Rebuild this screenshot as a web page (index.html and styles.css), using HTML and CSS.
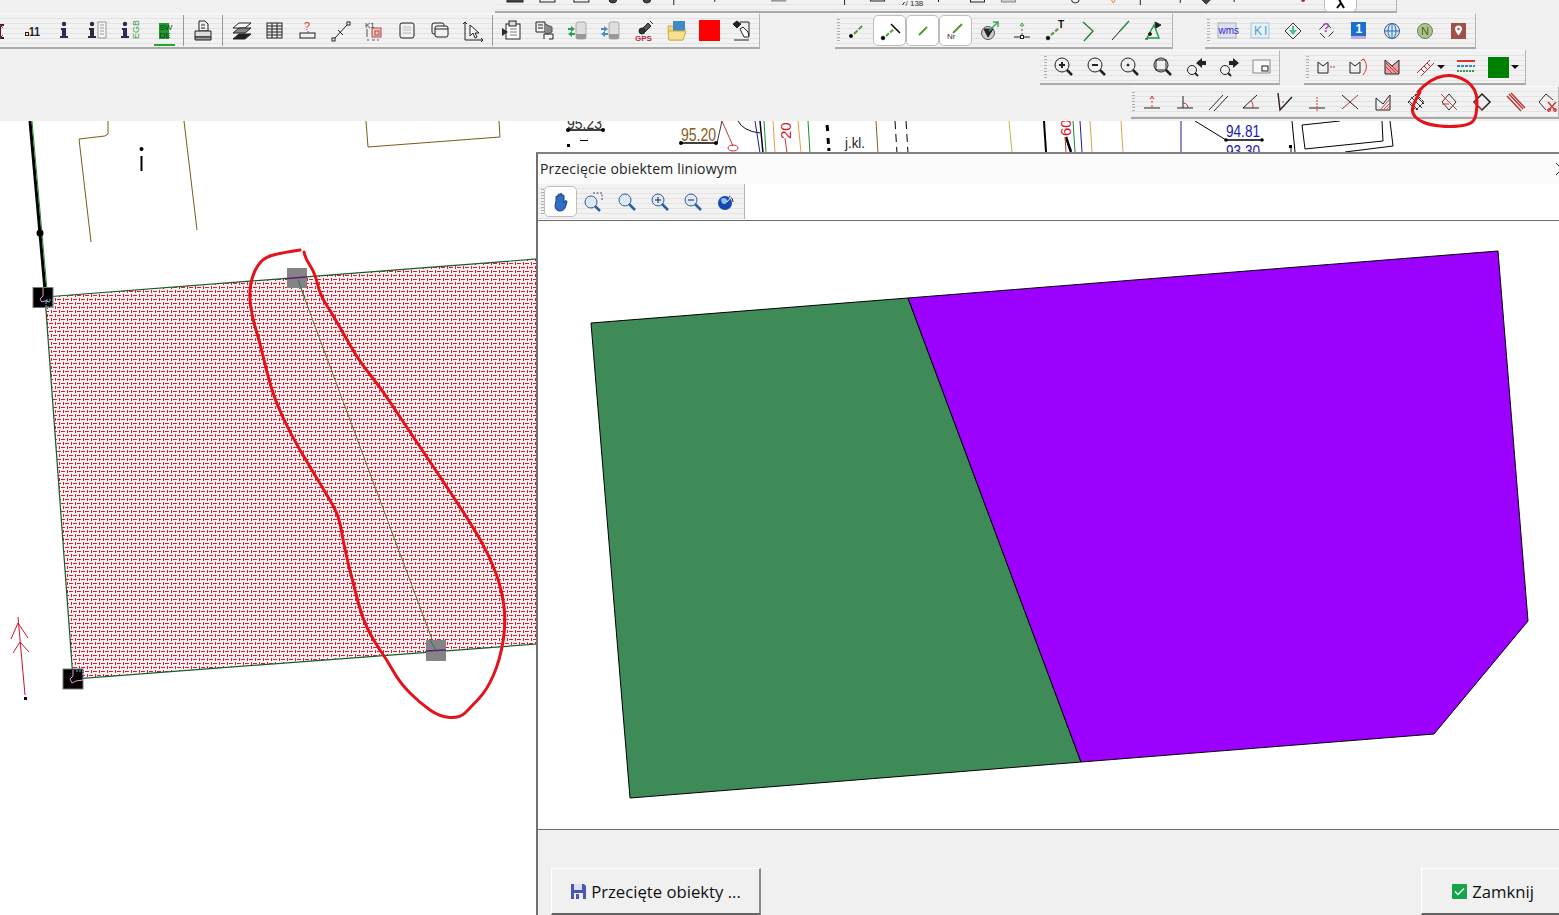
FILE: index.html
```html
<!DOCTYPE html>
<html lang="pl">
<head>
<meta charset="utf-8">
<title>Przecięcie obiektem liniowym</title>
<link rel="stylesheet" href="styles.css">
</head>
<body>
<div class="app">
  <header class="bands">
    <div class="row row-a">
      <div class="tb tb-clip">
        <svg class="clip-marks" width="902" height="12" viewBox="495 0 902 12">
          <g fill="#444" stroke="#222">
            <rect x="507" y="-8" width="16" height="10"/><rect x="540" y="-8" width="15" height="10" fill="none"/><rect x="574" y="-8" width="15" height="10" fill="none"/>
            <circle cx="613" cy="-1" r="4"/><circle cx="647" cy="-1" r="4"/><path d="M674 0v5M715 0v2"/>
            <rect x="772" y="-8" width="14" height="9" fill="#aaa" stroke="#888"/><path d="M845 0v5"/><rect x="871" y="-8" width="14" height="9" fill="none"/>
            <path d="M905 2l-2 3M939 0v2"/><rect x="971" y="-8" width="14" height="10" fill="none"/><rect x="1002" y="-8" width="14" height="10" fill="#ccc" stroke="#888"/>
            <rect x="1036" y="-6" width="14" height="6" fill="#bcd" stroke="none"/><circle cx="1076" cy="-1" r="4" fill="none"/><path d="M1111 -2l3 5 3-5" stroke="#e7813a" fill="none"/><path d="M1141 0v5M1181 0v3"/>
            <path d="M1202 -1h10l-5 5z"/><path d="M1235 0v2"/><circle cx="1304" cy="0" r="2" fill="#933" stroke="none"/>
          </g>
          <text x="906" y="6" class="clip-txt">/ 138</text>
        </svg>
        <div class="clip-active">
          <svg width="16" height="12" viewBox="0 0 16 12"><path d="M5 -3l3 6 3 5M8 3L4 8" fill="none" stroke="#000" stroke-width="2"/></svg>
        </div>
      </div>
    </div>

    <div class="row row-b">
      <div class="tb tb-main">
        <div class="btn btn-cut"><svg width="15" height="24" viewBox="16 0 15 24"><path d="M12 6h8M12 19h8M16 6v13" fill="none" stroke="#3a2030" stroke-width="2"/><path d="M13 9l3-3 3 3M13 16l3 3 3-3" fill="none" stroke="#c22" stroke-width="1"/></svg></div>
        <div class="btn"><svg class="ic" viewBox="0 0 24 24"><rect x="5.500" y="13.500" width="3" height="3"/><text x="9" y="17" class="t-11" textLength="11" lengthAdjust="spacingAndGlyphs">11</text></svg></div>
        <div class="btn"><svg class="ic" viewBox="0 0 24 24"><circle cx="11" cy="5" r="2.200" class="f-navy"/><path class="f-navy" d="M8 9h5v8h2v2H7v-2h2v-6H8z"/></svg></div>
        <div class="btn"><svg class="ic" viewBox="0 0 24 24"><circle cx="6" cy="5" r="2.200" class="f-dark"/><path class="f-dark" d="M3 9h5v8h2v2H2v-2h2v-6H3z"/><rect x="12" y="3" width="8" height="16" stroke="#999" fill="#f6f6f6"/><path d="M14 6h4M14 9h4M14 12h4M14 15h4" stroke="#999"/></svg></div>
        <div class="btn"><svg class="ic" viewBox="0 0 24 24"><circle cx="6" cy="5" r="2.200" class="f-navy"/><path class="f-navy" d="M3 9h5v8h2v2H2v-2h2v-6H3z"/><text x="-20" y="20" class="t-egb" transform="rotate(-90)">EGB</text></svg></div>
        <div class="btn btn-on-line"><svg class="ic" viewBox="0 0 24 24"><rect x="7" y="4" width="10" height="16" fill="#1f9b2f" stroke="none"/><text x="7.500" y="11" class="t-swde">SW</text><text x="7.500" y="19" class="t-swde">DE</text></svg></div>
        <div class="sep"></div>
        <div class="btn"><svg class="ic" viewBox="0 0 24 24"><path d="M8 2h6l3 3v7H8zM10 6h4M10 9h4"/><path d="M4 12h16v6H4z" fill="#ddd"/><path d="M4 18h16v3H4z" fill="#999"/></svg></div>
        <div class="sep"></div>
        <div class="btn"><svg class="ic" viewBox="0 0 24 24"><path d="M3 9l6-5h12l-6 5z" fill="#fff"/><path d="M3 14l6-5h12l-6 5z" fill="#888"/><path d="M3 20l6-5h12l-6 5z" fill="#222"/></svg></div>
        <div class="btn"><svg class="ic" viewBox="0 0 24 24"><rect x="4" y="4" width="15" height="15"/><path d="M4 7h15M4 10h15M4 13h15M4 16h15M9 4v15M14 4v15"/></svg></div>
        <div class="btn"><svg class="ic" viewBox="0 0 24 24"><rect x="4" y="14" width="15" height="5"/><path d="M12 12v2" stroke="#c22"/><text x="8" y="11" class="t-q">?</text></svg></div>
        <div class="btn"><svg class="ic" viewBox="0 0 24 24"><path d="M5 20L19 5"/><rect x="3" y="19" width="3" height="3" fill="#fff"/><rect x="18" y="3" width="3" height="3" fill="#fff"/><path d="M9 11l5 5"/></svg></div>
        <div class="btn"><svg class="ic" viewBox="0 0 24 24"><text x="3" y="9" class="t-k1">K1</text><rect x="10" y="9" width="9" height="9" fill="#e9c9c9" stroke="#b44"/><rect x="13" y="12" width="4" height="4" stroke="#b44"/><path d="M5 10v8M5 21h2M10 21h3M15 21h2" stroke="#555"/></svg></div>
        <div class="btn"><svg class="ic" viewBox="0 0 24 24"><rect x="5" y="4" width="14" height="15" rx="2"/><path d="M8 8h8M8 11h8M8 14h8" stroke="#bbb"/></svg></div>
        <div class="btn"><svg class="ic" viewBox="0 0 24 24"><rect x="4" y="4" width="12" height="11" rx="2"/><rect x="7" y="7" width="13" height="11" rx="2" fill="#f2f2f2"/><path d="M7 10h13" stroke="#222"/></svg></div>
        <div class="btn"><svg class="ic" viewBox="0 0 24 24"><path d="M4 3v18h18M2 5l2-2 2 2M20 19l2 2-2 2"/><path d="M9 6v11l3-3 2 5 2-1-2-4h4z" fill="#fff"/></svg></div>
        <div class="sep"></div>
        <div class="btn"><svg class="ic" viewBox="0 0 24 24"><rect x="6" y="5" width="14" height="15" fill="#fff"/><rect x="9" y="2" width="7" height="5" fill="#ddd"/><path d="M2 9l6 4-6 4z" class="f-dark"/><path d="M10 10h7M10 13h7M10 16h7" stroke="#777"/></svg></div>
        <div class="btn"><svg class="ic" viewBox="0 0 24 24"><path d="M3 3h9v10H3zM5 6h5M5 9h5" /><path d="M12 5l7 3v5l-4 2-3-1" fill="#888" stroke="#555"/><path d="M11 15h9v5h-4M11 15v5"/></svg></div>
        <div class="btn"><svg class="ic" viewBox="0 0 24 24"><rect x="10" y="3" width="10" height="17" rx="2" fill="#ddd" stroke="#aaa"/><path d="M10 15h10v5H10z" fill="#999" stroke="none"/><path d="M2 9h3v-2l4 3-4 3v-2H2zM9 14h-3v-2l-4 3 4 3v-2h3z" fill="#2aa24a" stroke="none"/></svg></div>
        <div class="btn"><svg class="ic" viewBox="0 0 24 24"><rect x="10" y="3" width="10" height="17" rx="2" fill="#ddd" stroke="#aaa"/><path d="M10 15h10v5H10z" fill="#999" stroke="none"/><path d="M2 9h3v-2l4 3-4 3v-2H2zM9 14h-3v-2l-4 3 4 3v-2h3z" fill="#3f8fd0" stroke="none"/></svg></div>
        <div class="btn"><svg class="ic" viewBox="0 0 24 24"><path d="M8 12l8-8 3 3-8 8z" fill="#555"/><circle cx="10" cy="12" r="3" fill="#333"/><path d="M18 2l3 3" stroke="#333"/><text x="3" y="22" class="t-gps">GPS</text></svg></div>
        <div class="btn"><svg class="ic" viewBox="0 0 24 24"><path d="M3 7h5l2 2h10l-2 12H4z" fill="#f2d774" stroke="#cfae3f"/><path d="M8 2h12v10H8z" fill="#3f89c9" stroke="none"/><path d="M3 12h18l-3 9H4z" fill="#f7e08e" stroke="#cfae3f"/></svg></div>
        <div class="btn"><div class="swatch swatch-red"></div></div>
        <div class="btn"><svg class="ic" viewBox="0 0 24 24"><path d="M2 5l4-3 4 3-4 4z" fill="#222"/><path d="M9 3h9v14" /><path d="M9 10l3-2 5 5 1 5h-5z" fill="#fff"/><path d="M3 21h15"/></svg></div>
      </div>

      <div class="tb tb-draw">
        <div class="grip"></div>
        <div class="btn"><svg class="ic" viewBox="0 0 24 24"><circle cx="6" cy="17" r="1.600" fill="#000"/><path d="M9 15l9-9" stroke="#5b9a3c" stroke-width="2" stroke-dasharray="5 1.500"/></svg></div>
        <div class="btn on"><svg class="ic" viewBox="0 0 24 24"><circle cx="5" cy="19" r="1.800" fill="#000"/><path d="M8 17l8-7" stroke="#5b9a3c" stroke-width="2" stroke-dasharray="4 1.500"/><path d="M13 5l9 9" stroke="#000" stroke-width="1.500"/></svg></div>
        <div class="btn on"><svg class="ic" viewBox="0 0 24 24"><path d="M8 16l8-8" stroke="#4e9a30" stroke-width="2"/></svg></div>
        <div class="btn on"><svg class="ic" viewBox="0 0 24 24"><path d="M9 14l9-9" stroke="#4e9a30" stroke-width="2"/><text x="3" y="20" class="t-nr">Nr</text></svg></div>
        <div class="btn"><svg class="ic" viewBox="0 0 24 24"><circle cx="11" cy="14" r="6.500" fill="#ccc" stroke="#555"/><path d="M7 10h9l-5 8z" fill="#222"/><path d="M12 12l9-9M16 3h5v5" stroke="#3ea66a" stroke-width="1.500"/></svg></div>
        <div class="btn"><svg class="ic" viewBox="0 0 24 24"><path d="M4 18h16"/><rect x="10.500" y="16.500" width="3" height="3" fill="#fff"/><path d="M12 16V6" stroke="#555" stroke-dasharray="2 2"/><path d="M10 7l2-3 2 3" stroke="#3a9a3a"/></svg></div>
        <div class="btn"><svg class="ic" viewBox="0 0 24 24"><circle cx="5" cy="19" r="1.800" fill="#000"/><path d="M8 16l8-7" stroke="#5b9a3c" stroke-width="2.200" stroke-dasharray="4 1.500"/><text x="15" y="9" class="t-t">T</text></svg></div>
        <div class="btn"><svg class="ic" viewBox="0 0 24 24"><path d="M7 3l10 9-9 10" stroke="#2e7d3d" stroke-width="1.400"/></svg></div>
        <div class="btn"><svg class="ic" viewBox="0 0 24 24"><path d="M3 21L11 12" stroke="#222"/><path d="M11 12l9-10" stroke="#2e8d3d" stroke-width="1.600"/></svg></div>
        <div class="btn"><svg class="ic" viewBox="0 0 24 24"><path d="M5 19h12L12 6z" stroke="#1f9b3f" stroke-width="1.400"/><path d="M13 3l6 3-5 3z" fill="#222"/><path d="M3 20h3" stroke="#222"/><circle cx="8" cy="15" r="1.500" fill="#222"/></svg></div>
      </div>

      <div class="tb tb-web">
        <div class="grip"></div>
        <div class="btn"><svg class="ic" viewBox="0 0 24 24"><rect x="3" y="4" width="18" height="15" fill="#dfe0f2" stroke="#aab"/><text x="3.500" y="15" class="t-wms">wms</text></svg></div>
        <div class="btn"><svg class="ic" viewBox="0 0 24 24"><rect x="3" y="4" width="18" height="15" fill="#e4f1f8" stroke="#9fc6dc"/><text x="6" y="16" class="t-ki">KI</text></svg></div>
        <div class="btn"><svg class="ic" viewBox="0 0 24 24"><path d="M12 4l8 8-8 8-8-8z" stroke="#333"/><path d="M11 7v4H8l4 5 4-5h-3V7z" fill="#47c19a" stroke="none"/></svg></div>
        <div class="btn"><svg class="ic" viewBox="0 0 24 24"><path d="M12 4l8 8-8 8-8-8z" stroke="#333" stroke-dasharray="7 5"/><text x="8" y="13" class="t-pq">?</text></svg></div>
        <div class="btn"><svg class="ic" viewBox="0 0 24 24"><rect x="4" y="3" width="15" height="14" fill="#1b6fd1" stroke="none"/><rect x="4" y="17" width="15" height="3" fill="#c4a6e0" stroke="none"/><text x="8.500" y="14" class="t-one">1</text></svg></div>
        <div class="btn"><svg class="ic" viewBox="0 0 24 24"><circle cx="12" cy="12" r="7.500" fill="#d6e6f6" stroke="#557"/><ellipse cx="12" cy="12" rx="4" ry="7.500" stroke="#2f6fb8"/><path d="M4.500 12h15M12 4.500v15" stroke="#2f6fb8"/></svg></div>
        <div class="btn"><svg class="ic" viewBox="0 0 24 24"><circle cx="12" cy="12" r="7.500" fill="#a9c97e" stroke="#777"/><text x="8" y="16" class="t-n">N</text></svg></div>
        <div class="btn"><svg class="ic" viewBox="0 0 24 24"><rect x="5" y="4" width="15" height="16" fill="#a0504a" stroke="none"/><path d="M12.500 6.500a3.500 3.500 0 0 1 3.500 3.500c0 2-3.500 6.500-3.500 6.500s-3.500-4.500-3.500-6.500a3.500 3.500 0 0 1 3.500-3.500z" fill="#fff" stroke="none"/><circle cx="12.500" cy="10" r="1.200" fill="#a0504a" stroke="none"/></svg></div>
      </div>
    </div>

    <div class="row row-c">
      <div class="tb tb-zoom">
        <div class="grip"></div>
        <div class="btn"><svg class="ic ic-b" viewBox="0 0 24 24"><circle cx="10" cy="10" r="7"/><path d="M7 10h6M10 7v6" stroke-width="2"/><path d="M15 15l5 5" stroke-width="2.500"/></svg></div>
        <div class="btn"><svg class="ic ic-b" viewBox="0 0 24 24"><circle cx="10" cy="10" r="7"/><path d="M7 10h6" stroke-width="2"/><path d="M15 15l5 5" stroke-width="2.500"/></svg></div>
        <div class="btn"><svg class="ic ic-b" viewBox="0 0 24 24"><circle cx="10" cy="10" r="7"/><circle cx="10" cy="10" r="1" fill="#222"/><path d="M15 15l5 5" stroke-width="2.500"/></svg></div>
        <div class="btn"><svg class="ic ic-b" viewBox="0 0 24 24"><circle cx="10" cy="10" r="7"/><rect x="5" y="5" width="10" height="10"/><path d="M15 15l5 5" stroke-width="2.500"/></svg></div>
        <div class="btn"><svg class="ic ic-b" viewBox="0 0 24 24"><circle cx="8" cy="15" r="4.500"/><path d="M11 18l3 3" stroke-width="2"/><path d="M12 8l6-5v3h4v4h-4v3z" fill="#222" stroke="none"/></svg></div>
        <div class="btn"><svg class="ic ic-b" viewBox="0 0 24 24"><circle cx="8" cy="15" r="4.500"/><path d="M11 18l3 3" stroke-width="2"/><path d="M22 8l-6-5v3h-4v4h4v3z" fill="#222" stroke="none"/></svg></div>
        <div class="btn"><svg class="ic ic-b" viewBox="0 0 24 24"><rect x="3" y="5" width="17" height="13" fill="#f7f7f7" stroke="#888"/><rect x="12" y="11" width="6" height="5" stroke="#222"/></svg></div>
      </div>

      <div class="tb tb-style">
        <div class="grip"></div>
        <div class="btn"><svg class="ic" viewBox="0 0 24 24"><path d="M4 7l5 4 5-4v11H4z"/><path d="M16 12h6" stroke="#d33" stroke-dasharray="2 1"/></svg></div>
        <div class="btn"><svg class="ic" viewBox="0 0 24 24"><path d="M3 7l5 4 5-4v11H3z"/><path d="M16 4c4 3 5 10 0 16M14 6l2-2 2 1" stroke="#d33"/></svg></div>
        <div class="btn"><svg class="ic" viewBox="0 0 24 24"><path d="M5 5l7 6 7-6v14H5z" fill="#e8a0a0"/><path d="M6 12l6 6M6 8l10 10M12 11l7 7" stroke="#c33"/></svg></div>
        <div class="btn"><svg class="ic" viewBox="0 0 24 24"><path d="M4 18L17 5M8 21L21 8" stroke="#a33"/><path d="M8 14l4 4M11 11l4 4M14 8l4 4" stroke="#a33"/></svg></div>
        <div class="arrow"></div>
        <div class="btn"><svg class="ic" viewBox="0 0 24 24"><path d="M3 6h18" stroke="#d33" stroke-width="2"/><path d="M3 11h18" stroke="#3a8ac0" stroke-width="2" stroke-dasharray="3 1"/><path d="M3 16h18" stroke="#2aa04a" stroke-width="2" stroke-dasharray="2 1"/></svg></div>
        <div class="btn"><div class="swatch swatch-green"></div></div>
        <div class="arrow"></div>
      </div>
    </div>

    <div class="row row-d">
      <div class="tb tb-geom">
        <div class="grip"></div>
        <div class="btn"><svg class="ic" viewBox="0 0 24 24"><path d="M4 18h16"/><path d="M12 17V8" stroke="#d33" stroke-dasharray="2 2"/><path d="M10 9l2-3 2 3" stroke="#d33"/></svg></div>
        <div class="btn"><svg class="ic" viewBox="0 0 24 24"><path d="M4 18h16M10 18V6"/><path d="M10 13c3 0 5 2 5 5" stroke="#a33"/></svg></div>
        <div class="btn"><svg class="ic" viewBox="0 0 24 24"><path d="M3 20L17 5M8 21L22 6" stroke="#333"/></svg></div>
        <div class="btn"><svg class="ic" viewBox="0 0 24 24"><path d="M18 5L4 18h16"/><path d="M12 11c2 2 2 4 2 7" stroke="#d33"/></svg></div>
        <div class="btn"><svg class="ic" viewBox="0 0 24 24"><path d="M6 3l2 17L20 7" stroke-width="1.400"/><path d="M6 12h8" stroke="#d33" stroke-dasharray="2 2"/></svg></div>
        <div class="btn"><svg class="ic" viewBox="0 0 24 24"><path d="M4 18h16"/><path d="M12 7v14" stroke="#d33" stroke-dasharray="2 1"/></svg></div>
        <div class="btn"><svg class="ic" viewBox="0 0 24 24"><path d="M4 5l16 14" stroke="#222"/><path d="M20 5L4 19" stroke="#b33"/></svg></div>
        <div class="btn"><svg class="ic" viewBox="0 0 24 24"><path d="M5 8l7 6 7-9v15H5z"/><path d="M12 20l7-7M15 20l4-4M9 20l10-11" stroke="#c44"/></svg></div>
        <div class="btn"><svg class="ic" viewBox="0 0 24 24"><path d="M12 4l8 8-8 8-8-8z" stroke-dasharray="3 1"/><path d="M7 7l11 11M5 11l9 9M11 5l9 9" stroke="#333"/></svg></div>
        <div class="btn"><svg class="ic" viewBox="0 0 24 24"><path d="M12 4l7 8-7 8-7-8z" stroke="#333"/><path d="M4 4l16 16M5 14h7" stroke="#d33"/></svg></div>
        <div class="btn"><svg class="ic" viewBox="0 0 24 24"><path d="M12 4l8 8-8 8-8-8z" stroke="#222" stroke-width="1.500"/><path d="M4 12l8 8" stroke="#d33" stroke-width="1.500"/></svg></div>
        <div class="btn"><svg class="ic" viewBox="0 0 24 24"><path d="M4 6l14 15M6 4l14 15M8 3l14 15" stroke="#b33" stroke-width="1.400"/></svg></div>
        <div class="btn"><svg class="ic" viewBox="0 0 24 24"><path d="M10 4l-7 8 7 8" stroke="#333"/><path d="M10 4l7 6" stroke="#333"/><path d="M12 12l8 9M20 12l-8 9" stroke="#d33" stroke-width="1.500"/><circle cx="13" cy="20" r="1.500" stroke="#d33"/><circle cx="19" cy="20" r="1.500" stroke="#d33"/></svg></div>
      </div>
    </div>
  </header>

  <svg class="map" width="1559" height="794" viewBox="0 121 1559 794">
    <defs>
      <pattern id="hatch" width="8" height="8" patternUnits="userSpaceOnUse" x="1" y="2">
        <rect width="8" height="8" fill="#fff4f4"/>
        <g fill="#e2142c">
          <rect x="0" y="1" width="4" height="1"/><rect x="4" y="5" width="4" height="1"/><rect x="6" y="0" width="1" height="3"/><rect x="2" y="4" width="1" height="3"/>
        </g>
      </pattern>
    </defs>
    <g fill="none" stroke="#7a5a22">
      <path d="M108 121v13l-3 2-26 3 12 103M184 121l13 109M366 121l2 26 132-10-1-16"/>
    </g>
    <path d="M30 121L45 290" stroke="#000" stroke-width="3" fill="none"/>
    <path d="M32 121L47 290" stroke="#2a8a2a" stroke-width="1" fill="none"/>
    <circle cx="40" cy="233" r="3.500" fill="#000"/>
    <rect x="140.500" y="156" width="2" height="15" fill="#000"/><circle cx="141.500" cy="149" r="2" fill="#000"/>

    <path d="M45 297L537 259V644L73 679z" fill="url(#hatch)" stroke="#0b6030" stroke-width="1.200"/>
    <path d="M297 278L436 650" stroke="#4a7a3a" stroke-width="1" fill="none"/>

    <g fill="#000" stroke="#7a7a7a"><rect x="33" y="287.500" width="20" height="20"/><rect x="63" y="669" width="20" height="20"/></g>
    <path d="M43 288v8l-3 3 2 3 3-1 5 1" stroke="#e69ad8" fill="none"/><rect x="46" y="300" width="7" height="7" fill="none" stroke="#5fc7d8" stroke-dasharray="2 1"/>
    <path d="M73 670v6l-3 3 2 4 4-2 7-1" stroke="#e69ad8" fill="none"/><path d="M76 671h7v5" fill="none" stroke="#5fc7d8" stroke-dasharray="2 1"/>
    <g fill="#848484"><rect x="287" y="268" width="20" height="20"/><rect x="426" y="640" width="20" height="21"/></g>
    <path d="M287 278.500L307 277M426 651l20-1" stroke="#5a1e78" stroke-width="1.500"/>
    <path d="M298 280l7 18M430 640l6 10" stroke="#27726c"/>

    <g fill="none" stroke="#d3142a">
      <path d="M18 617L25 695M18 623L11 639M18 623L28 638M20 642L13 653M20 642L29 652"/>
    </g>
    <rect x="24" y="697" width="3" height="3" fill="#000"/>

    <g fill="none" stroke-width="1">
      <path d="M568 130H603M681 143H716" stroke="#000" stroke-width="1.500"/>
      <path d="M722 121L717 143" stroke="#333"/>
      <path d="M722 121L733 146" stroke="#c33"/>
      <path d="M738 121q5 10 22 12" stroke="#111"/>
      <path d="M755 121L760 153" stroke="#1a1a9a"/><path d="M760 121L763 153" stroke="#000" stroke-width="1.500"/><path d="M764 121L766 153" stroke="#1a8a2a"/>
      <path d="M773 121L775 153M798 121L801 153" stroke="#e8a040"/><path d="M785 138L787 153" stroke="#c33"/><path d="M808 121L810 153" stroke="#1a8a2a"/>
      <path d="M827 125L828 133M828 138L829 151" stroke="#000" stroke-width="3" stroke-dasharray="6 4"/>
      <path d="M876 121L878 153" stroke="#8a5a22"/>
      <path d="M895 121L897 153M906 121L908 153" stroke="#000" stroke-dasharray="8 5"/>
      <path d="M1009 121L1012 152" stroke="#c9b53a"/>
      <path d="M1044 121L1046 152" stroke="#000" stroke-width="2"/>
      <path d="M1066 137L1071 152" stroke="#000" stroke-width="2.500"/><path d="M1065 137L1066 152" stroke="#c33"/>
      <path d="M1073 121L1075 152" stroke="#1a8a2a"/><path d="M1080 121L1082 152" stroke="#1a1a9a"/>
      <path d="M1090 121L1092 152M1121 121L1123 152" stroke="#e8a040"/>
      <path d="M1181 121V152" stroke="#1a1a9a"/>
      <path d="M1195 121L1226 140" stroke="#000"/><path d="M1226 140H1262" stroke="#000" stroke-width="1.500"/>
      <path d="M1292 121L1295 152M1291 148v5" stroke="#000"/>
      <path d="M1302 125L1340 121M1302 125L1305 149L1383 141L1382 121M1390 121L1393 146L1345 152" stroke="#000"/>
    </g>
    <g fill="#000"><circle cx="568" cy="130" r="2"/><circle cx="603" cy="130" r="2"/><circle cx="681" cy="143" r="2"/><circle cx="716" cy="143" r="2"/><rect x="567" y="144" width="3" height="3"/><rect x="580" y="140" width="8" height="1"/><circle cx="1226" cy="140" r="1.800"/><circle cx="1262" cy="140" r="1.800"/><rect x="1289" y="145" width="3" height="3"/></g>
    <text x="567" y="129" class="m-txt m-dark" textLength="35" lengthAdjust="spacingAndGlyphs">95.23</text>
    <text x="681" y="141" class="m-txt m-brown" textLength="35" lengthAdjust="spacingAndGlyphs">95.20</text>
    <text x="845" y="148" class="m-txt m-small" textLength="20" lengthAdjust="spacingAndGlyphs">j.kl.</text>
    <text x="1226" y="137" class="m-txt m-blue" textLength="34" lengthAdjust="spacingAndGlyphs">94.81</text>
    <text x="1226" y="157" class="m-txt m-blue" textLength="34" lengthAdjust="spacingAndGlyphs">93.30</text>
    <text transform="translate(791 139) rotate(-90)" class="m-txt m-red">20</text>
    <text transform="translate(1071 136) rotate(-90)" class="m-txt m-red">60</text>
    <ellipse cx="733" cy="148" rx="5" ry="3" fill="none" stroke="#c33"/>

    <path class="scribble" d="M300 250 Q280 253 271.500 255.500 Q263 258 258 265.500 Q253 273 251 283 Q249 293 250.500 305 Q252 317 256 330 Q260 343 263.500 358 Q267 373 271 386.500 Q275 400 282.500 416.500 Q290 433 300 450 Q310 467 320 483.500 Q330 500 334.500 508.500 Q339 517 341 528.500 Q343 540 345.500 551.500 Q348 563 351.500 576.500 Q355 590 358.500 603.500 Q362 617 367.500 628.500 Q373 640 380 650 Q387 660 393.500 671.500 Q400 683 410 693 Q420 703 430 710 Q440 717 450 717.500 Q460 718 465 713 Q470 708 478.500 699 Q487 690 493.500 675 Q500 660 503 641.500 Q506 623 504 606.500 Q502 590 496 573.500 Q490 557 481.500 542 Q473 527 460 507 Q447 487 433.500 467 Q420 447 410 432 Q400 417 390 402 Q380 387 370 374.500 Q360 362 353.500 351 Q347 340 340 327.500 Q333 315 326.500 305 Q320 295 317.500 284 Q315 273 310 265.500 Q305 258 304 252"/>
  </svg>

  <section class="dialog">
    <div class="dlg-title"><span>Przecięcie obiektem liniowym</span><svg class="dlg-x" width="14" height="14" viewBox="0 0 14 14"><path d="M1 1l12 12M13 1L1 13" stroke="#222" fill="none"/></svg></div>
    <div class="dlg-toolrow">
      <div class="tb tb-dlg">
        <div class="grip"></div>
        <div class="btn on"><svg class="ic" viewBox="0 0 24 24"><path d="M7 11V7a1 1 0 0 1 2 0V5a1 1 0 0 1 2 0v-.500a1 1 0 0 1 2 0V6a1 1 0 0 1 2 0v7l1-2c1-1 2 0 2 1l-2 6c-1 2-3 3-5 3-3 0-5-2-5-5z" fill="#2f6fc9" stroke="#1c3f80"/></svg></div>
        <div class="btn"><svg class="ic ic-l" viewBox="0 0 24 24"><circle cx="9" cy="12" r="6" fill="#dce9f7"/><path d="M13 16l5 5" stroke="#2a5fa8" stroke-width="2.500"/><path d="M11 3h9v8" stroke="#446" stroke-dasharray="2 1.500"/></svg></div>
        <div class="btn"><svg class="ic ic-l" viewBox="0 0 24 24"><circle cx="10" cy="10" r="6" fill="#dce9f7"/><path d="M14 14l6 6" stroke="#2a5fa8" stroke-width="2.500"/></svg></div>
        <div class="btn"><svg class="ic ic-l" viewBox="0 0 24 24"><circle cx="10" cy="10" r="6" fill="#dce9f7"/><path d="M7 10h6M10 7v6" stroke="#223"/><path d="M14 14l6 6" stroke="#2a5fa8" stroke-width="2.500"/></svg></div>
        <div class="btn"><svg class="ic ic-l" viewBox="0 0 24 24"><circle cx="10" cy="10" r="6" fill="#dce9f7"/><path d="M7 10h6" stroke="#223"/><path d="M14 14l6 6" stroke="#2a5fa8" stroke-width="2.500"/></svg></div>
        <div class="btn"><svg class="ic" viewBox="0 0 24 24"><circle cx="11" cy="13" r="7" fill="#1748b0" stroke="none"/><path d="M7 9c3-2 5-1 6 1s-1 4-3 4-3-3-3-5z" fill="#8ac0f2" stroke="none"/><path d="M15 6c2 1 4 3 4 6" stroke="#223"/><path d="M13 12l5-6" stroke="#fff"/></svg></div>
      </div>
    </div>
    <svg class="dlg-canvas" width="1060" height="610" viewBox="538 221 1060 608">
      <path d="M591 323L908 298L1081 762L630 798z" fill="#3e8b57" stroke="#000"/>
      <path d="M908 298L1498 251L1528 621L1434 734L1081 762z" fill="#9c00ff" stroke="#000"/>
    </svg>
    <footer class="dlg-foot">
      <div class="win-btn win-save">
        <svg width="17" height="17" viewBox="0 0 17 17"><path d="M1 1h13l2 2v13H1z" fill="#4a55b5"/><rect x="4" y="1" width="8" height="6" fill="#dcdff2"/><rect x="4" y="10" width="9" height="6" fill="#eef"/><rect x="6" y="11" width="3" height="5" fill="#4a55b5"/></svg>
        <span>Przecięte obiekty ...</span>
      </div>
      <div class="win-btn win-close">
        <svg width="15" height="15" viewBox="0 0 15 15"><rect width="15" height="15" rx="1" fill="#17a24c"/><path d="M3 7.500l3 3 6-6" fill="none" stroke="#e8fff0" stroke-width="1.300"/></svg>
        <span>Zamknij</span>
      </div>
    </footer>
  </section>

  <svg class="ink" width="100" height="70" viewBox="1400 70 100 70">
    <path class="scribble" d="M1420 92 Q1413 104 1412.500 108.500 Q1412 113 1415 116.500 Q1418 120 1424 122.500 Q1430 125 1440 126 Q1450 127 1459 126 Q1468 125 1471.500 122.500 Q1475 120 1476 114 Q1477 108 1477 101.500 Q1477 95 1474.500 90 Q1472 85 1467 81.500 Q1462 78 1456 76.500 Q1450 75 1443.500 76 Q1437 77 1430.500 81 Q1424 85 1418 92"/>
  </svg>
</div>
</body>
</html>
```

FILE: styles.css
```css
* { box-sizing: border-box; }
html, body { margin: 0; padding: 0; }
body { width: 1559px; height: 915px; overflow: hidden; background: #fff; font-family: "Open Sans", "Noto Sans", sans-serif; color: #111; }

.app { position: relative; width: 1559px; height: 915px; overflow: hidden; }

.bands { height: 121px; background: #f0f0f0; display: flex; flex-direction: column; }
.row { display: flex; flex: none; }
.row-a { height: 13px; padding-left: 495px; }
.row-b { height: 36px; }
.row-c { height: 35px; margin-top: 1px; padding-left: 1040px; }
.row-d { height: 33px; margin-top: 1px; padding-left: 1131px; }

.tb {
  display: flex;
  align-items: center;
  height: 100%;
  background: repeating-linear-gradient(to bottom, #f2f2f2 0, #f2f2f2 4px, #e3e3e3 4px, #e3e3e3 5px);
  border-bottom: 2px solid #a9a9a9;
  border-right: 1px solid #b5b5b5;
  border-top: 1px solid #f8f8f8;
}
.tb-clip { position: relative; width: 902px; border-top: 0; }
.clip-marks { display: block; }
.clip-txt { font: 8px "Liberation Sans", sans-serif; fill: #333; }
.clip-active { position: absolute; left: 829px; top: 0; width: 33px; height: 12px; background: #fff; border: 1px solid #bbb; border-top: 0; border-radius: 0 0 5px 5px; display: flex; justify-content: center; }

.tb-main { width: 760px; }
.tb-draw { margin-left: 75px; width: 338px; padding-left: 5px; }
.tb-web { margin-left: 32px; width: 271px; padding-left: 5px; }
.tb-zoom { width: 240px; padding-left: 7px; }
.tb-style { margin-left: 24px; width: 222px; padding-left: 5px; }
.tb-geom { width: 428px; padding-left: 4px; }
.tb-dlg { width: 207px; height: 35px; padding-left: 6px; border-right: 1px solid #b5b5b5; border-bottom: 0; border-top: 0; }

.grip { flex: none; width: 3px; height: 70%; margin-left: -3px; background: repeating-linear-gradient(to bottom, #b0b0b0 0, #b0b0b0 1px, transparent 1px, transparent 3px); }

.btn { flex: none; width: 33px; height: 31px; display: flex; align-items: center; justify-content: center; border: 1px solid transparent; }
.btn.on { background: #fff; border-color: #bdbdbd; border-radius: 5px; }
.btn-cut { width: 15px; border: 0; }
.btn-on-line { position: relative; }
.btn-on-line::after { content: ""; position: absolute; left: 6px; right: 4px; bottom: -1px; height: 2px; background: #22a82a; }
.sep { flex: none; width: 6px; height: 100%; position: relative; }
.sep::after { content: ""; position: absolute; left: 3px; top: 1px; bottom: 1px; width: 1px; background: #9a9a9a; }
.arrow { flex: none; width: 0; height: 0; border-left: 4px solid transparent; border-right: 4px solid transparent; border-top: 4px solid #111; margin: 0 0 0 -4px; }
.tb-style .arrow + .btn { margin-left: 4px; }
.swatch { width: 21px; height: 21px; }
.swatch-red { background: #ff0000; }
.swatch-green { background: #008000; }

.ic { display: block; width: 24px; height: 24px; fill: none; stroke: #222; stroke-width: 1; }
.ic-l { stroke: #3a5a92; }
.ic text { stroke: none; font-family: "Liberation Sans", sans-serif; }
.f-navy { fill: #2b2a5e; stroke: none; }
.f-dark { fill: #2a2a3a; stroke: none; }
.t-11 { font-size: 13px; font-weight: 700; fill: #222; }
.t-egb { font-size: 9px; fill: #3aa04a; }
.t-swde { font-size: 8px; fill: #0b3d10; }
.t-q { font-size: 11px; fill: #d33; }
.t-k1 { font-size: 8px; fill: #333; }
.t-gps { font-size: 8px; font-weight: 700; fill: #b8233f; }
.t-nr { font-size: 8px; fill: #333; }
.t-t { font-size: 10px; font-weight: 700; fill: #111; font-family: "Liberation Serif", serif; }
.t-wms { font-size: 10px; fill: #2a2ad0; }
.t-ki { font-size: 12px; fill: #5a9ac0; letter-spacing: 2px; }
.t-pq { font-size: 13px; font-weight: 700; fill: #a050b0; }
.t-one { font-size: 12px; font-weight: 700; fill: #fff; }
.t-n { font-size: 11px; fill: #555; }

.map { display: block; }
.m-txt { font-family: "Liberation Sans", sans-serif; font-size: 18px; }
.m-dark { fill: #333; font-size: 16px; }
.m-brown { fill: #8a5a22; font-size: 18px; }
.m-blue { fill: #1a1ab0; font-size: 17px; }
.m-small { fill: #222; font-size: 15px; }
.m-red { fill: #d3142a; font-size: 15px; }
.scribble { fill: none; stroke: #e2131b; stroke-width: 3; stroke-linejoin: round; stroke-linecap: round; }

.ink { position: absolute; left: 1400px; top: 70px; }

.dialog { position: absolute; left: 536px; top: 152px; width: 1060px; height: 763px; border-left: 2px solid #707070; border-top: 2px solid #808080; background: #f0f0f0; display: flex; flex-direction: column; }
.dlg-title { height: 30px; flex: none; background: #fbfbfb; display: flex; align-items: center; justify-content: space-between; padding: 0 0 2px 2px; font-size: 14px; letter-spacing: .18px; color: #222; position: relative; }
.dlg-x { position: absolute; left: 1017px; top: 8px; }
.dlg-toolrow { height: 36px; flex: none; background: #fff; }
.dlg-canvas { display: block; flex: none; background: #fff; border-top: 1px solid #6c6c6c; border-bottom: 1px solid #6c6c6c; height: 610px; }
.dlg-foot { flex: 1; display: flex; align-items: flex-end; justify-content: space-between; padding: 0 30px 0 13px; }
.win-btn { height: 47px; display: flex; align-items: center; justify-content: center; gap: 4px; font-size: 16.700px; color: #111; background: #f0f0f0; border-top: 1px solid #fff; border-left: 1px solid #fff; border-right: 2px solid #8a8a8a; border-bottom: 2px solid #636363; }
.win-save { width: 210px; }
.win-close { width: 145px; gap: 5px; }
```
